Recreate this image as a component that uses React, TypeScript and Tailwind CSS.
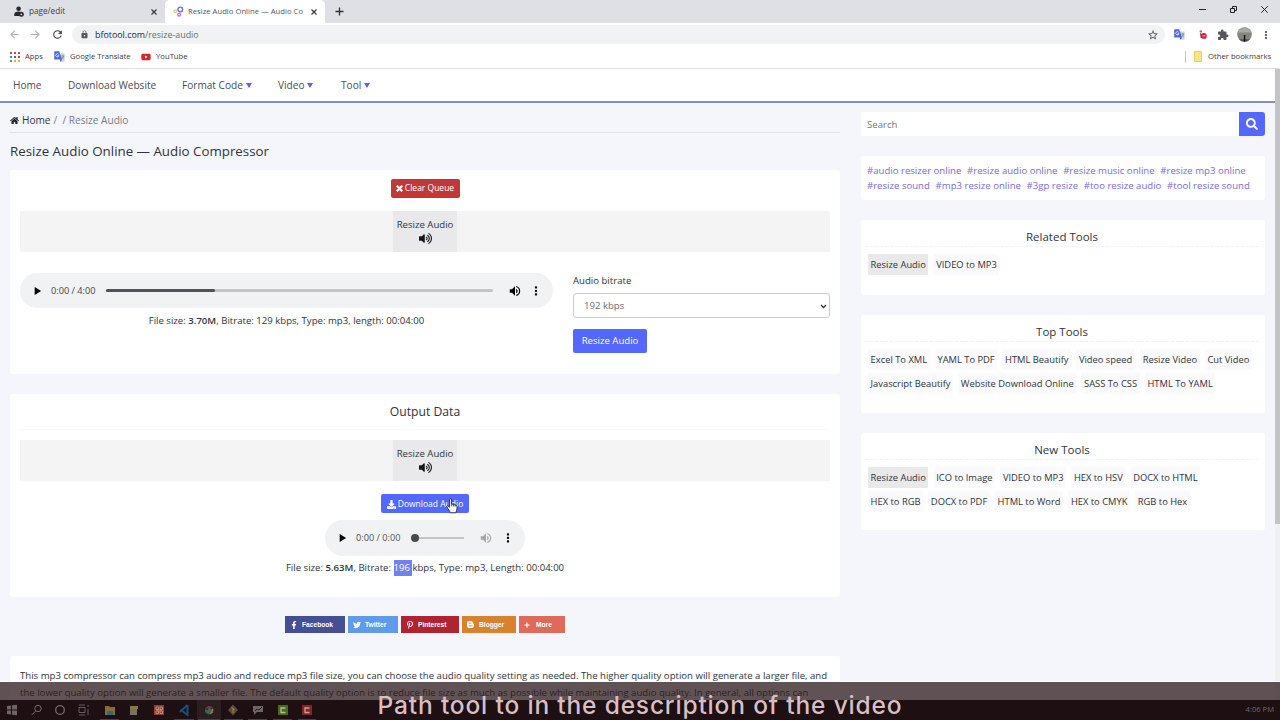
import type { ReactNode } from "react";
import {
  FaBlogger,
  FaDownload,
  FaFacebookF,
  FaHome,
  FaPinterestP,
  FaPlus,
  FaSearch,
  FaTwitter,
  FaVolumeUp,
  FaYoutube,
} from "react-icons/fa";
import {
  MdArrowBack,
  MdArrowForward,
  MdExtension,
  MdLock,
  MdMoreVert,
  MdPlayArrow,
  MdRefresh,
  MdStarBorder,
  MdVolumeUp,
} from "react-icons/md";

const navItems = [
  { label: "Home", width: "w-[55px]", menu: false },
  { label: "Download Website", width: "w-[114px]", menu: false },
  { label: "Format Code", width: "w-[96px]", menu: true },
  { label: "Video", width: "w-[63px]", menu: true },
  { label: "Tool", width: "w-[60px]", menu: true },
];

const tagRows = [
  [
    "#audio resizer online",
    "#resize audio online",
    "#resize music online",
    "#resize mp3 online",
  ],
  [
    "#resize sound",
    "#mp3 resize online",
    "#3gp resize",
    "#too resize audio",
    "#tool resize sound",
  ],
];

const topTools = [
  ["Excel To XML", "YAML To PDF", "HTML Beautify", "Video speed", "Resize Video", "Cut Video"],
  ["Javascript Beautify", "Website Download Online", "SASS To CSS", "HTML To YAML"],
];

const newTools = [
  ["Resize Audio", "ICO to Image", "VIDEO to MP3", "HEX to HSV", "DOCX to HTML"],
  ["HEX to RGB", "DOCX to PDF", "HTML to Word", "HEX to CMYK", "RGB to Hex"],
];

const shares = [
  { label: "Facebook", style: "w-[60px] bg-[#444f95]", icon: <FaFacebookF /> },
  { label: "Twitter", style: "w-[50px] bg-[#5f9bea]", icon: <FaTwitter /> },
  { label: "Pinterest", style: "w-[58px] bg-[#b02331]", icon: <FaPinterestP /> },
  {
    label: "Blogger",
    style: "w-[54px] bg-[#d9822d]",
    icon: (
      <svg width="7" height="7" viewBox="0 0 7 7">
        <path d="M2 0h2a2 2 0 012 2c0 .6.900.5.900 1.100V5a2 2 0 01-2 2H2a2 2 0 01-2-2V2a2 2 0 012-2z" fill="#fff" />
        <path d="M2 2.200h1.800M2 4.800h3" stroke="#d9822d" strokeWidth=".9" strokeLinecap="round" />
      </svg>
    ),
  },
  { label: "More", style: "w-[46px] bg-[#de6a5c]", icon: <FaPlus size={6} /> },
];

const Close = () => (
  <svg width="6" height="6" viewBox="0 0 6 6" stroke="#333" strokeWidth="1.1">
    <path d="M.5.5l5 5M5.5.5l-5 5" />
  </svg>
);

const UserIcon = () => (
  <svg width="10" height="11" viewBox="0 0 10 11" fill="#26282b">
    <circle cx="4.6" cy="2.7" r="2.3" />
    <path d="M.3 10V8.300C.3 6.500 2 5.500 4.300 5.500S8 6.200 8 8v2z" />
    <circle cx="7.300" cy="8.300" r="2.500" />
    <circle cx="7.300" cy="8.300" r=".9" fill="#dee0e5" />
  </svg>
);

const AppsIcon = () => (
  <svg width="10" height="10" viewBox="0 0 10 10">
    <path d="M0 0h2v2H0zM4 0h2v2H4zM8 0h2v2H8z" fill="#c9443c" />
    <path d="M0 4h2v2H0z" fill="#4a9a53" />
    <path d="M4 4h2v2H4z" fill="#4468d2" />
    <path d="M8 4h2v2H8z" fill="#c9443c" />
    <path d="M0 8h2v2H0z" fill="#4a9a53" />
    <path d="M4 8h2v2H4zM8 8h2v2H8z" fill="#e2ab3b" />
  </svg>
);

const TranslateIcon = () => (
  <svg width="11" height="11" viewBox="0 0 11 11">
    <path d="M4.5 2.5H10a.7.7 0 01.7.7V10a.7.7 0 01-.7.7H6.5z" fill="#c9d3e0" />
    <path d="M.8.3h4.4L8 8.5H.8A.6.6 0 01.2 8V.9A.6.6 0 01.8.3z" fill="#5068d8" />
    <path d="M5.9 8.5H8L6.6 10.8z" fill="#3348b0" />
    <path d="M4.6 3.3a1.6 1.6 0 10.3 1.4H3.5" fill="none" stroke="#fff" strokeWidth=".8" />
    <path d="M7.3 5h2.9M8.7 4.2V5M9.7 5c-.2 1.4-1 2.3-1.8 2.9M7.9 5.8c.4.9 1 1.5 1.8 2" fill="none" stroke="#6a7a99" strokeWidth=".6" />
  </svg>
);

const GearsIcon = () => (
  <svg width="11" height="11" viewBox="0 0 11 11" fill="none">
    <circle cx="7.3" cy="3.4" r="2.3" stroke="#6d6de0" strokeWidth="1.4" />
    <circle cx="2.4" cy="5.2" r="1.4" stroke="#c4dc7a" strokeWidth="1.2" />
    <circle cx="6.1" cy="8.8" r="1.4" stroke="#c169cf" strokeWidth="1.2" />
  </svg>
);

const Browser = () => (
  <header className="whitespace-nowrap font-['Open_Sans',sans-serif] text-[7.7px] text-[#3c4043]">
    <div className="flex h-[23px] bg-[#dee0e5]">
      <div className="flex w-[165px] items-center pl-[14px] pr-[8px]">
        <UserIcon />
        <span className="ml-[5px] flex-1 text-[8.2px]">page/edit</span>
        <Close />
      </div>
      <div className="flex w-[160px] items-center rounded-t-[5px] bg-white pl-[8px] pr-[8px]">
        <GearsIcon />
        <span className="ml-[4px] text-[7.7px] text-[#55585c]">Resize Audio Online — Audio Co</span>
        <span className="ml-auto">
          <Close />
        </span>
      </div>
      <svg className="ml-[10px] mt-[7px]" width="9" height="9" stroke="#333" strokeWidth="1.3">
        <path d="M4.5.5v8M.5 4.5h8" />
      </svg>
      <div className="ml-auto flex h-[19px] items-center gap-[24px] pr-[12px]">
        <svg width="7" height="7" stroke="#222">
          <path d="M0 3.5h7" />
        </svg>
        <svg width="7" height="7" fill="none" stroke="#222">
          <path d="M.5 2.5h4v4h-4zM2.5 2.5v-2h4v4h-2" />
        </svg>
        <svg width="7" height="7" stroke="#222">
          <path d="M.3.3l6.4 6.4M6.7.3L.3 6.7" />
        </svg>
      </div>
    </div>
    <div className="flex h-[23px] items-center bg-white pl-[8px]">
      <MdArrowBack size={13} className="text-[#b0b2b5]" />
      <MdArrowForward size={13} className="ml-[8px] text-[#b0b2b5]" />
      <MdRefresh size={13} className="ml-[9px] text-[#444]" />
      <div className="ml-[8px] flex h-[19px] w-[1093px] items-center rounded-full bg-[#f1f2f4] pl-[8px] pr-[6px]">
        <MdLock size={9} className="text-[#55585c]" />
        <span className="ml-[6px] flex-1 text-[8.9px] text-[#6a6e72]">
          <span className="text-[#25282c]">bfotool.com</span>/resize-audio
        </span>
        <MdStarBorder size={12} className="text-[#555]" />
      </div>
      <div className="ml-[9px] flex flex-1 items-center">
        <TranslateIcon />
        <svg className="ml-[14px]" width="8" height="9" viewBox="0 0 8 9">
          <circle cx="1.8" cy="1.4" r="1.2" fill="#e2526c" />
          <path d="M1 3l2 1v4H1.600z" fill="#7b3650" />
          <circle cx="4.900" cy="5.900" r="2.900" fill="#cf2338" />
          <path d="M3.400 5.900h3" stroke="#f5b5bc" />
        </svg>
        <MdExtension size={12} className="ml-[10px] text-[#55585c]" />
        <svg className="ml-[8px]" width="15" height="15" viewBox="0 0 15 15">
          <circle cx="7.500" cy="7.500" r="7.300" fill="#85857c" />
          <path d="M.8 5.500a7.300 7.300 0 0113.400 0z" fill="#a9aaa2" />
          <path d="M2 12.300h11a7.300 7.300 0 01-11 0z" fill="#55544c" />
          <path d="M6.800 8h1.500v6.500H6.800z" fill="#151515" />
        </svg>
        <MdMoreVert size={12} className="ml-[8px] text-[#444]" />
      </div>
    </div>
    <div className="flex h-[23px] items-center border-b border-[#dcdde0] bg-white pb-[1px] pl-[10px] pr-[10px]">
      <AppsIcon />
      <span className="ml-[5px] w-[19px]">Apps</span>
      <span className="ml-[10px]">
        <TranslateIcon />
      </span>
      <span className="ml-[5px] w-[60px]">Google Translate</span>
      <FaYoutube size={10} className="ml-[11px] text-[#cf2a27]" />
      <span className="ml-[5px]">YouTube</span>
      <span className="ml-auto h-[12px] w-px bg-[#c8c9cc]" />
      <svg className="ml-[8px]" width="8" height="11">
        <path d="M.5.5h7v10h-7z" fill="#f6e58c" stroke="#e8cf62" />
      </svg>
      <span className="ml-[6px] w-[62px]">Other bookmarks</span>
    </div>
  </header>
);

const AudioStrip = () => (
  <div className="flex h-[41px] justify-center bg-[#f4f4f4]">
    <div className="flex w-[64px] flex-col items-center bg-[#e9e9ec] pt-[6px]">
      <span className="whitespace-nowrap leading-[15px]">Resize Audio</span>
      <FaVolumeUp size={13} className="text-[#151515]" />
    </div>
  </div>
);

const Chips = ({ rows }: { rows: string[][] }) => (
  <div className="flex flex-col gap-[2.6px] pl-[7px] text-[9.36px] text-[#30343a]">
    {rows.map((row) => (
      <div key={row[0]} className="flex gap-[5.2px]">
        {row.map((name) => (
          <span
            key={name}
            className={
              name === "Resize Audio"
                ? "h-[21px] whitespace-nowrap bg-[#e9e9ea] px-[2.6px] leading-[22px]"
                : "h-[21px] whitespace-nowrap bg-[#fafafc] px-[2.6px] leading-[22px]"
            }
          >
            {name}
          </span>
        ))}
      </div>
    ))}
  </div>
);

const ToolCard = ({ title, style, rows }: { title: string; style: string; rows: string[][] }) => (
  <section className={`rounded-[3px] bg-white ${style}`}>
    <h3 className="mb-[7px] ml-[4px] mr-[6px] h-[27px] border-b border-dashed border-[#f0f0f2] pt-[7px] text-center text-[11.5px] leading-[19px]">
      {title}
    </h3>
    <Chips rows={rows} />
  </section>
);

const Card = ({ style, children }: { style: string; children: ReactNode }) => (
  <section className={`rounded-[3px] bg-white px-[10px] ${style}`}>{children}</section>
);

const Converter = () => (
  <Card style="mt-[9px] h-[204px] pt-[9px]">
    <button className="mx-auto mb-[13px] flex h-[19px] w-[69px] items-center justify-center gap-[2px] whitespace-nowrap rounded-[2px] bg-[#c23838] text-[8.5px] text-white">
      <svg width="7" height="7" stroke="#fff" strokeWidth="2.2">
        <path d="M.8.8l5.400 5.400M6.200.8L.8 6.200" />
      </svg>
      Clear Queue
    </button>
    <AudioStrip />
    <div className="mt-[21px] flex gap-[20px]">
      <div className="w-[533px]">
        <div className="flex h-[35px] items-center rounded-full bg-[#f1f2f4] pl-[10px] pr-[10px] text-[9.2px] text-[#444]">
          <MdPlayArrow size={14} className="text-black" />
          <span className="ml-[7px] w-[45px] whitespace-nowrap">0:00 / 4:00</span>
          <div className="ml-[10px] h-[3px] w-[387px] rounded-full bg-[#c3c4c6]">
            <div className="h-full w-[109px] rounded-full bg-[#505256]" />
          </div>
          <MdVolumeUp size={14} className="ml-[15px] text-black" />
          <MdMoreVert size={14} className="ml-auto text-black" />
        </div>
        <p className="mt-[5px] text-center leading-[16px]">
          File size: <b className="font-semibold">3.70M</b>, Bitrate: 129 kbps, Type: mp3, length: 00:04:00
        </p>
      </div>
      <div className="flex-1">
        <label className="block h-[20px] leading-[16px]">Audio bitrate</label>
        <div className="flex h-[25px] items-center justify-between rounded-[3px] border border-[#c9cdd2] pl-[10px] pr-[2px] pt-px text-[#666c72]">
          <span>192 kbps</span>
          <svg width="7" height="5" fill="none" stroke="#333" strokeWidth="1.3">
            <path d="M1 1l2.500 2.500L6 1" />
          </svg>
        </div>
        <button className="mt-[11px] h-[24px] w-[74px] whitespace-nowrap rounded-[2px] bg-[#5468ff] pt-px text-white">
          Resize Audio
        </button>
      </div>
    </div>
  </Card>
);

const HandCursor = () => (
  <svg className="absolute left-[65px] top-[4px]" width="12" height="16" viewBox="0 0 12 16">
    <path
      d="M3.600 9.200V1.800a1 1 0 012 0V6l1.700.3 1.500.4 1.400.6c.6.300.8.700.8 1.300v2.200c0 1.700-1 2.200-1.200 4H4.400c-.5-1.600-1.500-2.600-2.300-3.900L.8 8.700c-.3-.7.8-1.200 1.400-.6z"
      fill="#fff"
      stroke="#222"
      strokeWidth=".9"
    />
    <path d="M5.600 6v2.500M7.400 6.400v2.200M9.100 6.800v2" stroke="#222" strokeWidth=".7" />
  </svg>
);

const Output = () => (
  <Card style="mt-[20px] h-[203px]">
    <h2 className="mb-[10px] h-[36px] border-b border-[#fafafa] pt-[8px] text-center text-[12.2px] leading-[19px]">
      Output Data
    </h2>
    <AudioStrip />
    <div className="relative mx-auto mt-[13px] w-[88px]">
      <button className="flex h-[19px] w-full items-center justify-center gap-[2px] whitespace-nowrap rounded-[2px] bg-[#5468ff] pt-px text-[8.5px] text-white">
        <FaDownload size={9} />
        Download Audio
      </button>
      <HandCursor />
    </div>
    <div className="mx-auto mt-[7px] flex h-[36px] w-[200px] items-center rounded-full bg-[#f1f2f4] pl-[10px] pr-[10px] text-[9.2px] text-[#555]">
      <MdPlayArrow size={14} className="text-black" />
      <span className="ml-[7px] w-[45px] whitespace-nowrap">0:00 / 0:00</span>
      <div className="ml-[10px] flex h-[2px] w-[53px] items-center bg-[#c3c4c6]">
        <span className="h-[8px] w-[8px] shrink-0 rounded-full bg-[#48494c]" />
      </div>
      <MdVolumeUp size={14} className="ml-[15px] text-[#a6a7a9]" />
      <MdMoreVert size={14} className="ml-auto text-black" />
    </div>
    <p className="mt-[4px] text-center leading-[16px]">
      File size: <b className="font-semibold">5.63M</b>, Bitrate:{" "}
      <span className="inline-block bg-[#7280ee] text-white">196&nbsp;</span>
      kbps, Type: mp3, Length: 00:04:00
    </p>
  </Card>
);

const Sidebar = () => (
  <aside className="w-[404px]">
    <div className="flex h-[24px]">
      <div className="flex-1 bg-white pl-[6px] text-[9.6px] leading-[25px] text-[#75787d]">Search</div>
      <div className="flex w-[26px] items-center justify-center rounded-r-[3px] bg-[#5468ff] text-white">
        <FaSearch size={12} />
      </div>
    </div>
    <div className="mt-[20px] h-[44px] rounded-[3px] bg-white pl-[6px] pt-[7px] text-[9.6px] leading-[15px] text-[#7a6cd2]">
      {tagRows.map((row) => (
        <div key={row[0]} className="flex gap-[5.7px] whitespace-nowrap">
          {row.map((tag) => (
            <span key={tag}>{tag}</span>
          ))}
        </div>
      ))}
    </div>
    <ToolCard title="Related Tools" style="mt-[20px] h-[75px]" rows={[["Resize Audio", "VIDEO to MP3"]]} />
    <ToolCard title="Top Tools" style="mt-[20px] h-[98px]" rows={topTools} />
    <ToolCard title="New Tools" style="mt-[20px] h-[97px]" rows={newTools} />
  </aside>
);

const Taskbar = () => (
  <footer className="h-[20px] bg-[#1d0f12]">
    <svg width="320" height="20" fill="none">
      <path d="M7 6l4-.5v4H7zM12 5.300l5-.6v4.800h-5zM7 10.500h4v4L7 14zM12 10.500h5v4.800l-5-.6z" fill="#6f6367" />
      <circle cx="38" cy="8.500" r="3.200" stroke="#776b6f" />
      <path d="M35.700 11l-4 4" stroke="#776b6f" />
      <circle cx="60" cy="10" r="4.300" stroke="#776b6f" strokeWidth="1.300" />
      <path d="M79 7.500h6v5h-6zM79 5h6M79 15h6M88 5v2M88 9v6" stroke="#685c60" />
      <path d="M105 6h4l1 1h5v8h-10z" fill="#8c6c31" />
      <path d="M107 11h6v4h-6z" fill="#356681" />
      <path d="M130 6h7v9h-7z" fill="#7a7260" />
      <path d="M131 6h7v3h-7z" fill="#8b7a2f" />
      <path d="M154 5h10v10h-10z" fill="#903d25" />
      <path d="M156 7h2.500v2.500H156zM160 7h2.500v2.500H160zM156 11h2.500v2.500H156zM160 11h2.500v2.500H160zM157 10h5" stroke="#c59c8d" strokeWidth=".8" />
      <path d="M187.500 5v10l-7-5.500M180 12l7.500-7" stroke="#174f76" strokeWidth="2" />
      <path d="M197 0h24v20h-24z" fill="#2b1d20" />
      <path d="M205 9a4.500 4.500 0 018-1h-4z" fill="#8b342b" />
      <path d="M213 8a4.500 4.500 0 01-3.500 6.500L211 10z" fill="#97762b" />
      <path d="M205 9a4.500 4.500 0 004.500 5.500l1-3z" fill="#386a3b" />
      <circle cx="209.500" cy="10" r="2" fill="#3f5d91" />
      <path d="M233 4.500l5 5.500-5 5.500-5-5.500z" fill="#5d4c38" />
      <path d="M231.500 7l3 3M233 8.500V13" stroke="#a08a78" strokeWidth=".9" />
      <path d="M253 6h10v6h-6l-3 3v-3h-1z" fill="#6e6467" />
      <path d="M255 11l2-2 2 1 3-3" stroke="#2b2023" />
      <path d="M278 5h10v10h-10z" fill="#456b17" />
      <path d="M285.500 8h-4.500v4.500h4.500" stroke="#b0bd9c" strokeWidth="1.300" />
      <path d="M302 5h10v10h-10z" fill="#8b2322" />
      <path d="M309.500 8H305v4.500h4.500" stroke="#c3a3a3" strokeWidth="1.300" />
      <path d="M100 19.500h19M174 19.500h20M198 19.500h22M224 19.500h19M248 19.500h19M273 19.500h19M298 19.500h18" stroke="#45424f" />
    </svg>
  </footer>
);

const App = () => {
  return (
    <div className="relative flex h-[720px] w-[1280px] flex-col overflow-hidden bg-[#f5f6fc] font-['Open_Sans',sans-serif] text-[9.6px] text-[#30343a]">
      <Browser />
      <div className="flex h-[631px] overflow-hidden">
        <main className="w-[1275px]">
          <nav className="flex h-[34px] border-b-2 border-[#8390bf] bg-white pl-[13px] text-[10.1px] leading-[32px] text-[#4a4d52]">
            {navItems.map((item) => (
              <div key={item.label} className={`flex items-center whitespace-nowrap ${item.width}`}>
                {item.label}
                {item.menu && (
                  <svg className="ml-[3px]" width="6" height="5">
                    <path d="M0 0h6L3 5z" fill="#6a5fd0" />
                  </svg>
                )}
              </div>
            ))}
          </nav>
          <div className="flex gap-[21px] pl-[10px] pt-[9px]">
            <div className="w-[830px]">
              <div className="flex h-[21px] items-center whitespace-nowrap border-b border-[#dfe2e6] pb-[3px] text-[10.1px] text-[#757a80]">
                <FaHome size={9} className="mr-[3px] text-[#222]" />
                <span className="text-[#30343a]">Home</span>
                <span className="ml-[3px] whitespace-pre">/  / Resize Audio</span>
              </div>
              <h1 className="mt-[9px] h-[19px] whitespace-nowrap text-[13.33px] leading-[19px]">
                Resize Audio Online — Audio Compressor
              </h1>
              <Converter />
              <Output />
              <div className="mt-[19px] flex justify-center gap-[3px]">
                {shares.map((share) => (
                  <div
                    key={share.label}
                    className={`flex h-[17px] items-center pl-[5px] font-['Liberation_Sans',sans-serif] text-[6.67px] font-bold text-white ${share.style}`}
                  >
                    <span className="w-[12px] text-[8px]">{share.icon}</span>
                    {share.label}
                  </div>
                ))}
              </div>
              <Card style="mt-[23px] h-[60px] pt-[11px]">
                <p className="whitespace-nowrap leading-[17px]">
                  This mp3 compressor can compress mp3 audio and reduce mp3 file size, you can choose the audio quality setting as needed. The higher quality option will generate a larger file, and
                  <br />
                  the lower quality option will generate a smaller file. The default quality option is to reduce file size as much as possible while maintaining audio quality. In general, all options can
                </p>
              </Card>
            </div>
            <Sidebar />
          </div>
        </main>
        <div className="w-[5px] bg-[#f0f0f1]">
          <div className="h-[455px] bg-[#c4c4c6]" />
        </div>
      </div>
      <Taskbar />
      <div className="absolute inset-x-0 bottom-0 flex h-[39px] items-center justify-center border-t border-white">
        <div className="absolute inset-x-0 top-0 h-[18px] bg-[#2c1a1c]/75" />
        <p className="relative mt-[7px] whitespace-nowrap font-['Inter',sans-serif] text-[24.5px] font-medium leading-[30px] tracking-[0.83px] text-[#d8bfc5]">
          Path tool to in the description of the video
        </p>
        <span className="absolute right-[6px] top-[22px] text-[7.6px] text-[#76696d]">4:06 PM</span>
      </div>
    </div>
  );
};

export default App;
